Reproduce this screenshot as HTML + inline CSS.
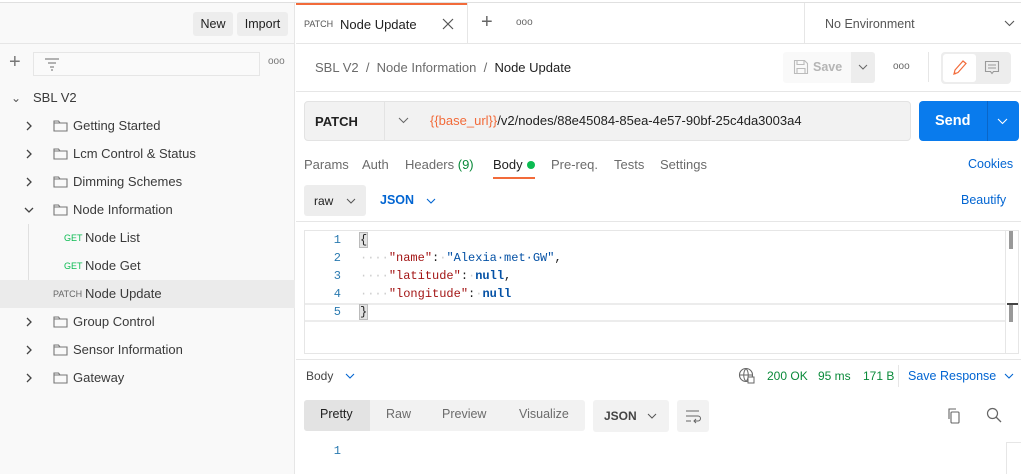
<!DOCTYPE html>
<html><head><meta charset="utf-8"><style>
*{box-sizing:border-box;margin:0;padding:0}
body{width:1021px;height:474px;overflow:hidden;background:#fff;font-family:"Liberation Sans",sans-serif;font-size:13px;color:#212121;position:relative}
.a{position:absolute;white-space:nowrap}
.sb{left:0;top:3px;width:295px;height:471px;background:#f9f9f9;border-right:1px solid #e6e6e6}
.btn{background:#ededed;border-radius:3px;font-size:12.5px;text-align:center;line-height:24px;height:24px}
.row{left:0;width:295px;height:28px;line-height:28px;font-size:13px;color:#3a3a3a}
.chev{color:#555;font-size:12px}
.fold{width:13px;height:11px;border:1.3px solid #777;border-radius:1px}
.fold:before{content:"";position:absolute;left:-1px;top:-4px;width:6px;height:3px;border:1.3px solid #777;border-bottom:none}
.mono{font-family:"Liberation Mono",monospace;font-size:12px}
.ln{color:#2a7ab0;width:14px;text-align:right}
.gray{color:#6b6b6b}
.blue{color:#0265d2}
</style></head><body>
<div class="a" style="left:0;top:0;width:1021px;height:3px;background:#fff;border-bottom:1px solid #e0e0e0"></div>
<div class="a sb"></div>
<div class="a btn" style="left:193px;top:12px;width:40px">New</div>
<div class="a btn" style="left:237px;top:12px;width:51px">Import</div>
<div class="a" style="left:0;top:43px;width:295px;height:1px;background:#e6e6e6"></div>
<div class="a" style="left:9px;top:52px;font-size:20px;color:#777;line-height:20px">+</div>
<div class="a" style="left:33px;top:52px;width:227px;height:24px;border:1px solid #e6e6e6;background:#fafafa"></div>
<svg class="a" style="left:44px;top:57px" width="16" height="14"><path d="M1 2h14M4 6h8M6 10h4M7 13h2" stroke="#888" stroke-width="1.2"/></svg>
<div class="a" style="left:268px;top:56px;font-size:10px;color:#777">ooo</div>
<div class="a row" style="top:84px"><span class="a chev" style="left:11px">&#8964;</span><span class="a" style="left:33px">SBL V2</span></div>
<svg width="0" height="0" style="position:absolute"><defs><g id="f"><path d="M1 3v10h13V5H7L5.5 3z M1 5h13" fill="none" stroke="#777" stroke-width="1.1"/></g><g id="r"><path d="M1 1l4 4-4 4" fill="none" stroke="#444" stroke-width="1.3"/></g><g id="d"><path d="M1 1l4 4 4-4" fill="none" stroke="#444" stroke-width="1.3"/></g></defs></svg>
<div class="a row" style="top:112px"><svg class="a" style="left:26px;top:9px" width="8" height="11"><use href="#r"/></svg><svg class="a" style="left:53px;top:6px" width="16" height="16"><use href="#f"/></svg><span class="a" style="left:73px">Getting Started</span></div>
<div class="a row" style="top:140px"><svg class="a" style="left:26px;top:9px" width="8" height="11"><use href="#r"/></svg><svg class="a" style="left:53px;top:6px" width="16" height="16"><use href="#f"/></svg><span class="a" style="left:73px">Lcm Control &amp; Status</span></div>
<div class="a row" style="top:168px"><svg class="a" style="left:26px;top:9px" width="8" height="11"><use href="#r"/></svg><svg class="a" style="left:53px;top:6px" width="16" height="16"><use href="#f"/></svg><span class="a" style="left:73px">Dimming Schemes</span></div>
<div class="a row" style="top:196px"><svg class="a" style="left:24px;top:11px" width="11" height="8"><use href="#d"/></svg><svg class="a" style="left:53px;top:6px" width="16" height="16"><use href="#f"/></svg><span class="a" style="left:73px">Node Information</span></div>
<div class="a" style="left:28px;top:224px;width:1px;height:84px;background:#e0e0e0"></div>
<div class="a row" style="top:224px"><span class="a" style="left:64px;font-size:9px;color:#0cbb52">GET</span><span class="a" style="left:85px">Node List</span></div>
<div class="a row" style="top:252px"><span class="a" style="left:64px;font-size:9px;color:#0cbb52">GET</span><span class="a" style="left:85px">Node Get</span></div>
<div class="a row" style="top:280px;background:#ebebeb"><span class="a" style="left:53px;font-size:9px;color:#666">PATCH</span><span class="a" style="left:85px">Node Update</span></div>
<div class="a row" style="top:308px"><svg class="a" style="left:26px;top:9px" width="8" height="11"><use href="#r"/></svg><svg class="a" style="left:53px;top:6px" width="16" height="16"><use href="#f"/></svg><span class="a" style="left:73px">Group Control</span></div>
<div class="a row" style="top:336px"><svg class="a" style="left:26px;top:9px" width="8" height="11"><use href="#r"/></svg><svg class="a" style="left:53px;top:6px" width="16" height="16"><use href="#f"/></svg><span class="a" style="left:73px">Sensor Information</span></div>
<div class="a row" style="top:364px"><svg class="a" style="left:26px;top:9px" width="8" height="11"><use href="#r"/></svg><svg class="a" style="left:53px;top:6px" width="16" height="16"><use href="#f"/></svg><span class="a" style="left:73px">Gateway</span></div>

<!-- tabs -->
<div class="a" style="left:296px;top:3px;width:171px;height:2px;background:#f26b3a"></div>
<div class="a" style="left:296px;top:43px;width:725px;height:1px;background:#e6e6e6"></div>
<div class="a" style="left:467px;top:3px;width:1px;height:40px;background:#e6e6e6"></div>
<div class="a" style="left:304px;top:19px;font-size:9px;color:#555">PATCH</div>
<div class="a" style="left:340px;top:17px">Node Update</div>
<svg class="a" style="left:442px;top:18px" width="12" height="12"><path d="M1 1l10 10M11 1L1 11" stroke="#555" stroke-width="1.2"/></svg>
<div class="a" style="left:481px;top:11px;font-size:20px;color:#666">+</div>
<div class="a" style="left:516px;top:17px;font-size:10px;color:#666">ooo</div>
<div class="a" style="left:804px;top:3px;width:1px;height:40px;background:#e6e6e6"></div>
<div class="a" style="left:825px;top:17px;color:#555;font-size:12.5px">No Environment</div>
<svg class="a" style="left:1004px;top:20px" width="11" height="8"><path d="M1 1l4.5 4.5L10 1" fill="none" stroke="#555" stroke-width="1.1"/></svg>
<!-- breadcrumb -->
<div class="a" style="left:315px;top:60px;font-size:13px;color:#6b6b6b">SBL V2 &nbsp;/ &nbsp;Node Information &nbsp;/ &nbsp;<span style="color:#212121">Node Update</span></div>
<div class="a" style="left:783px;top:52px;width:68px;height:31px;background:#f9f9f9;border-radius:3px 0 0 3px"></div>
<div class="a" style="left:851px;top:52px;width:24px;height:31px;background:#ededed;border-radius:0 3px 3px 0"></div>
<svg class="a" style="left:793px;top:59px" width="16" height="16"><path d="M1.5 1.5h10l3 3v10h-13z M4 1.5v4h7v-4 M4 14.5v-5h8v5" fill="none" stroke="#bbb" stroke-width="1.1"/></svg>
<div class="a" style="left:813px;top:60px;color:#b5b5b5;font-weight:bold;font-size:12.5px">Save</div>
<svg class="a" style="left:858px;top:64px" width="10" height="7"><path d="M1 1l4 4 4-4" fill="none" stroke="#666" stroke-width="1"/></svg>
<div class="a" style="left:893px;top:61px;font-size:10px;color:#666">ooo</div>
<div class="a" style="left:928px;top:52px;width:1px;height:30px;background:#e6e6e6"></div>
<div class="a" style="left:941px;top:52px;width:70px;height:32px;background:#ededed;border-radius:4px"></div>
<div class="a" style="left:943px;top:54px;width:33px;height:28px;background:#fff;border-radius:3px"></div>
<svg class="a" style="left:951px;top:59px" width="16" height="17"><path d="M3 15l1-4 8-9 3 2.5-8 9z M3.5 13.5l1.5 1.5" fill="none" stroke="#f26b3a" stroke-width="1.2"/></svg>
<svg class="a" style="left:984px;top:60px" width="16" height="16"><path d="M1.5 1.5h13v10h-5l-1.5 2-1.5-2h-5z M4 5h8M4 8h8" fill="none" stroke="#999" stroke-width="1.1"/></svg>
<div class="a" style="left:296px;top:91px;width:725px;height:1px;background:#e6e6e6"></div>
<!-- URL bar -->
<div class="a" style="left:304px;top:101px;width:607px;height:40px;background:#f2f2f2;border:1px solid #e3e3e3;border-radius:4px"></div>
<div class="a" style="left:384px;top:102px;width:1px;height:38px;background:#e3e3e3"></div>
<div class="a" style="left:315px;top:114px;font-weight:bold;font-size:13px">PATCH</div>
<svg class="a" style="left:398px;top:117px" width="11" height="7"><path d="M1 1l4.5 4.5L10 1" fill="none" stroke="#666" stroke-width="1"/></svg>
<div class="a" style="left:393px;top:113px;font-size:13px;left:393px"><span></span></div>
<div class="a" style="left:393px;top:113px"></div>
<div class="a" style="left:393px;top:113px"></div>
<div class="a" style="left:430px;top:113px;font-size:13px;color:#212121"><span style="color:#f26b3a">{{base_url}}</span>/v2/nodes/88e45084-85ea-4e57-90bf-25c4da3003a4</div>
<div class="a" style="left:919px;top:101px;width:100px;height:40px;background:#097bed;border-radius:4px"></div>
<div class="a" style="left:987px;top:101px;width:1px;height:40px;background:#0a66c8"></div>
<div class="a" style="left:935px;top:113px;color:#fff;font-weight:bold;font-size:14.5px">Send</div>
<svg class="a" style="left:997px;top:118px" width="11" height="7"><path d="M1 1l4.5 4.5L10 1" fill="none" stroke="#fff" stroke-width="1.1"/></svg>
<!-- req tabs -->
<div class="a gray" style="left:304px;top:157px">Params</div>
<div class="a gray" style="left:362px;top:157px">Auth</div>
<div class="a gray" style="left:405px;top:157px">Headers <span style="color:#0a8a3a">(9)</span></div>
<div class="a" style="left:493px;top:157px">Body</div>
<div class="a" style="left:527px;top:161px;width:8px;height:8px;border-radius:50%;background:#0cbb52"></div>
<div class="a" style="left:493px;top:177px;width:42px;height:2px;background:#f26b3a"></div>
<div class="a gray" style="left:551px;top:157px">Pre-req.</div>
<div class="a gray" style="left:614px;top:157px">Tests</div>
<div class="a gray" style="left:660px;top:157px">Settings</div>
<div class="a blue" style="left:968px;top:157px;font-size:12.5px">Cookies</div>
<div class="a" style="left:304px;top:185px;width:62px;height:31px;background:#ededed;border-radius:3px"></div>
<div class="a" style="left:314px;top:194px;font-size:12px">raw</div>
<svg class="a" style="left:346px;top:198px" width="10" height="6"><path d="M1 1l4 4 4-4" fill="none" stroke="#555" stroke-width="1"/></svg>
<div class="a blue" style="left:380px;top:193px;font-weight:bold;font-size:12.5px">JSON</div>
<svg class="a" style="left:426px;top:198px" width="10" height="6"><path d="M1 1l4 4 4-4" fill="none" stroke="#0265d2" stroke-width="1.1"/></svg>
<div class="a blue" style="left:961px;top:193px;font-size:12.5px">Beautify</div>
<div class="a" style="left:296px;top:221px;width:725px;height:1px;background:#e6e6e6"></div>
<!-- editor -->
<div class="a" style="left:304px;top:230px;width:715px;height:124px;border:1px solid #e6e6e6"></div>
<div class="a" style="left:1005px;top:231px;width:1px;height:122px;background:#e6e6e6"></div>
<div class="a" style="left:1009px;top:231px;width:4px;height:18px;background:#999"></div>
<div class="a" style="left:1009px;top:304px;width:4px;height:18px;background:#999"></div>
<div class="a" style="left:1007px;top:303px;width:11px;height:2px;background:#444"></div>
<div class="a" style="left:305px;top:303px;width:700px;height:19px;border-top:2px solid #ececec;border-bottom:2px solid #ececec"></div>
<div class="a mono ln" style="left:327px;top:233px">1</div>
<div class="a mono ln" style="left:327px;top:251px">2</div>
<div class="a mono ln" style="left:327px;top:269px">3</div>
<div class="a mono ln" style="left:327px;top:287px">4</div>
<div class="a mono ln" style="left:327px;top:305px">5</div>
<div class="a mono" style="left:360px;top:233px;background:#e3e3e3;outline:1px solid #bbb">{</div>
<div class="a mono" style="left:360px;top:251px"><span style="color:#ccc">····</span><span style="color:#a31515">"name"</span>:<span style="color:#ccc">·</span><span style="color:#0451a5">"Alexia·met·GW"</span>,</div>
<div class="a mono" style="left:360px;top:269px"><span style="color:#ccc">····</span><span style="color:#a31515">"latitude"</span>:<span style="color:#ccc">·</span><b style="color:#0451a5">null</b>,</div>
<div class="a mono" style="left:360px;top:287px"><span style="color:#ccc">····</span><span style="color:#a31515">"longitude"</span>:<span style="color:#ccc">·</span><b style="color:#0451a5">null</b></div>
<div class="a mono" style="left:360px;top:305px;background:#e3e3e3;outline:1px solid #bbb">}</div>
<div class="a" style="left:296px;top:359px;width:725px;height:1px;background:#e6e6e6"></div>
<!-- response -->
<div class="a" style="left:306px;top:369px;font-size:12px;color:#444">Body</div>
<svg class="a" style="left:345px;top:373px" width="10" height="6"><path d="M1 1l4 4 4-4" fill="none" stroke="#0265d2" stroke-width="1.1"/></svg>
<svg class="a" style="left:738px;top:367px" width="18" height="18"><circle cx="8" cy="8" r="6.5" fill="none" stroke="#666" stroke-width="1.1"/><path d="M1.5 8h13M8 1.5c-3 3-3 10 0 13M8 1.5c3 3 3 10 0 13" fill="none" stroke="#666"/><rect x="10" y="10" width="6" height="6" fill="#fff" stroke="#666"/></svg>
<div class="a" style="left:767px;top:369px;font-size:12px;color:#0a8a3a">200 OK</div>
<div class="a" style="left:818px;top:369px;font-size:12px;color:#0a8a3a">95 ms</div>
<div class="a" style="left:863px;top:369px;font-size:12px;color:#0a8a3a">171 B</div>
<div class="a" style="left:898px;top:365px;width:1px;height:22px;background:#e6e6e6"></div>
<div class="a blue" style="left:908px;top:369px;font-size:12.5px">Save Response</div>
<svg class="a" style="left:1004px;top:373px" width="10" height="6"><path d="M1 1l4 4 4-4" fill="none" stroke="#0265d2" stroke-width="1.1"/></svg>
<div class="a" style="left:304px;top:400px;width:281px;height:31px;background:#f2f2f2;border-radius:3px"></div>
<div class="a" style="left:304px;top:400px;width:66px;height:31px;background:#e3e3e3;border-radius:3px 0 0 3px"></div>
<div class="a" style="left:320px;top:407px;font-size:12.5px">Pretty</div>
<div class="a gray" style="left:386px;top:407px;font-size:12.5px">Raw</div>
<div class="a gray" style="left:442px;top:407px;font-size:12.5px">Preview</div>
<div class="a gray" style="left:519px;top:407px;font-size:12.5px">Visualize</div>
<div class="a" style="left:593px;top:400px;width:76px;height:32px;background:#f2f2f2;border-radius:3px"></div>
<div class="a" style="left:604px;top:409px;font-size:12px;font-weight:bold;color:#444">JSON</div>
<svg class="a" style="left:647px;top:413px" width="10" height="6"><path d="M1 1l4 4 4-4" fill="none" stroke="#555" stroke-width="1"/></svg>
<div class="a" style="left:677px;top:400px;width:32px;height:32px;background:#f2f2f2;border-radius:3px"></div>
<svg class="a" style="left:684px;top:408px" width="18" height="16"><path d="M2 3h13M2 8h12a2.5 2.5 0 0 1 0 5h-4M12 11l-2 2 2 2M2 13h5" fill="none" stroke="#666" stroke-width="1"/></svg>
<svg class="a" style="left:946px;top:407px" width="16" height="18"><rect x="5" y="5" width="8" height="11" rx="1" fill="none" stroke="#666" stroke-width="1.1"/><path d="M3 12V2h7" fill="none" stroke="#666" stroke-width="1.1"/></svg>
<svg class="a" style="left:986px;top:407px" width="16" height="16"><circle cx="6.5" cy="6.5" r="5" fill="none" stroke="#666" stroke-width="1.2"/><path d="M10 10l5 5" stroke="#666" stroke-width="1.3"/></svg>
<div class="a mono ln" style="left:327px;top:444px">1</div>
<div class="a" style="left:1006px;top:442px;width:15px;height:32px;border-left:1px solid #e6e6e6;border-top:1px solid #e6e6e6"></div>
</body></html>
